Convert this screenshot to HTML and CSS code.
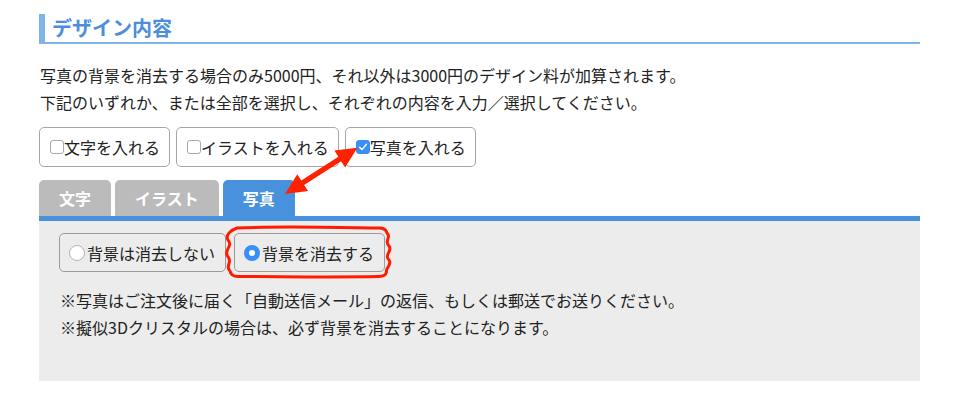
FILE: index.html
```html
<!DOCTYPE html>
<html lang="ja">
<head>
<meta charset="utf-8">
<title>デザイン内容</title>
<link rel="stylesheet" href="styles.css">
</head>
<body>
<div class="page">
  <h2 class="section-title">デザイン内容</h2>
  <p class="lead">写真の背景を消去する場合のみ5000円、それ以外は3000円のデザイン料が加算されます。<br>下記のいずれか、または全部を選択し、それぞれの内容を入力／選択してください。</p>
  <div class="choices">
    <label class="choice"><span class="check"></span>文字を入れる</label>
    <label class="choice"><span class="check"></span>イラストを入れる</label>
    <label class="choice"><span class="check is-checked"><svg viewBox="0 0 14 14" width="14" height="14"><path d="M3.6 7.2 L6 9.6 L10.4 4.2" fill="none" stroke="#fff" stroke-width="1.4" stroke-linecap="round" stroke-linejoin="round"/></svg></span>写真を入れる</label>
  </div>
  <div class="tabs">
    <div class="tab">文字</div>
    <div class="tab">イラスト</div>
    <div class="tab is-active">写真</div>
  </div>
  <div class="panel">
    <div class="radios">
      <label class="radio-btn"><span class="radio"></span>背景は消去しない</label>
      <label class="radio-btn"><span class="radio is-checked"></span>背景を消去する</label>
    </div>
    <p class="notes">※写真はご注文後に届く「自動送信メール」の返信、もしくは郵送でお送りください。<br>※擬似3Dクリスタルの場合は、必ず背景を消去することになります。</p>
  </div>
</div>
<svg class="annotations" width="960" height="405" viewBox="0 0 960 405">
  <g transform="translate(285,194) rotate(-32.6)">
    <polygon points="0,0 21,-10 21,-2.6 65,-2.6 65,-10 86,0 65,10 65,2.6 21,2.6 21,10" fill="#ff2200"/>
  </g>
  <path d="M237,228 C280,226 340,227.5 380,228 Q386,228.5 387,233 C392,237 383.5,241 389,246 C393,251 383.5,255 389,260 C392.5,265 385,268 386.5,272 Q385.5,276.5 379,276.5 C330,277.5 280,276.5 238,276.5 Q231,276.5 230,271 C224.5,266 233.5,262 227.5,256 C223.5,250 233.5,246 228,240 C225,235 231,230 237,228 Z" fill="none" stroke="#ff1a00" stroke-width="3" stroke-linejoin="round"/>
</svg>
</body>
</html>
```
FILE: styles.css
```css
* { box-sizing: border-box; }

html, body {
  margin: 0;
  padding: 0;
  background: #fff;
}

body {
  position: relative;
  width: 960px;
  height: 405px;
  overflow: hidden;
  font-family: "Noto Sans CJK JP", "Noto Sans", sans-serif;
  font-size: 16px;
  color: #222;
}

.page {
  width: 881px;
  margin-left: 39px;
  padding-top: 14px;
}

.section-title {
  margin: 0;
  height: 30px;
  padding-left: 7px;
  line-height: 28px;
  font-size: 20px;
  font-weight: bold;
  color: #4a8edc;
  border-left: 6px solid #7fb4e9;
  border-bottom: 2px solid #7fb4e9;
}

.lead {
  margin: 18px 0 0 1px;
  line-height: 27px;
}

.choices {
  display: flex;
  gap: 6px;
  margin-top: 11px;
}

.choice {
  display: inline-flex;
  align-items: center;
  height: 40px;
  padding: 0 9px 0 10px;
  background: #fff;
  border: 1px solid #a6a6a6;
  border-radius: 5px;
  line-height: 1;
}

.check {
  flex: none;
  display: block;
  width: 14px;
  height: 14px;
  background: #fff;
  border: 1px solid #a8a8a8;
  border-radius: 3px;
}

.check.is-checked {
  background: #3a8ff7;
  border-color: #3a8ff7;
}

.check svg {
  display: block;
  margin: -1px;
}

.tabs {
  display: flex;
  gap: 4px;
  margin-top: 13px;
}

.tab {
  height: 36px;
  padding: 0 20px;
  line-height: 36px;
  font-weight: bold;
  color: #fff;
  background: #bbbbbb;
  border-radius: 5px 5px 0 0;
}

.tab.is-active {
  background: #4891dc;
}

.panel {
  background: #ececec;
  border-top: 5px solid #4891dc;
  padding: 12px 20px 40px;
  height: 165px;
}

.radios {
  display: flex;
  gap: 8px;
}

.radio-btn {
  display: inline-flex;
  align-items: center;
  gap: 2px;
  height: 39px;
  padding: 0 10px 0 9px;
  border: 1px solid #9a9a9a;
  border-radius: 5px;
  line-height: 1;
}

.radio {
  flex: none;
  display: block;
  width: 16px;
  height: 16px;
  border-radius: 50%;
  background: #fff;
  border: 1px solid #b3b3b3;
}

.radio.is-checked {
  border: 5px solid #3a8ff7;
  background: #fff;
}

.notes {
  margin: 15px 0 0 1px;
  line-height: 27px;
}

.annotations {
  position: absolute;
  left: 0;
  top: 0;
  pointer-events: none;
}
```
